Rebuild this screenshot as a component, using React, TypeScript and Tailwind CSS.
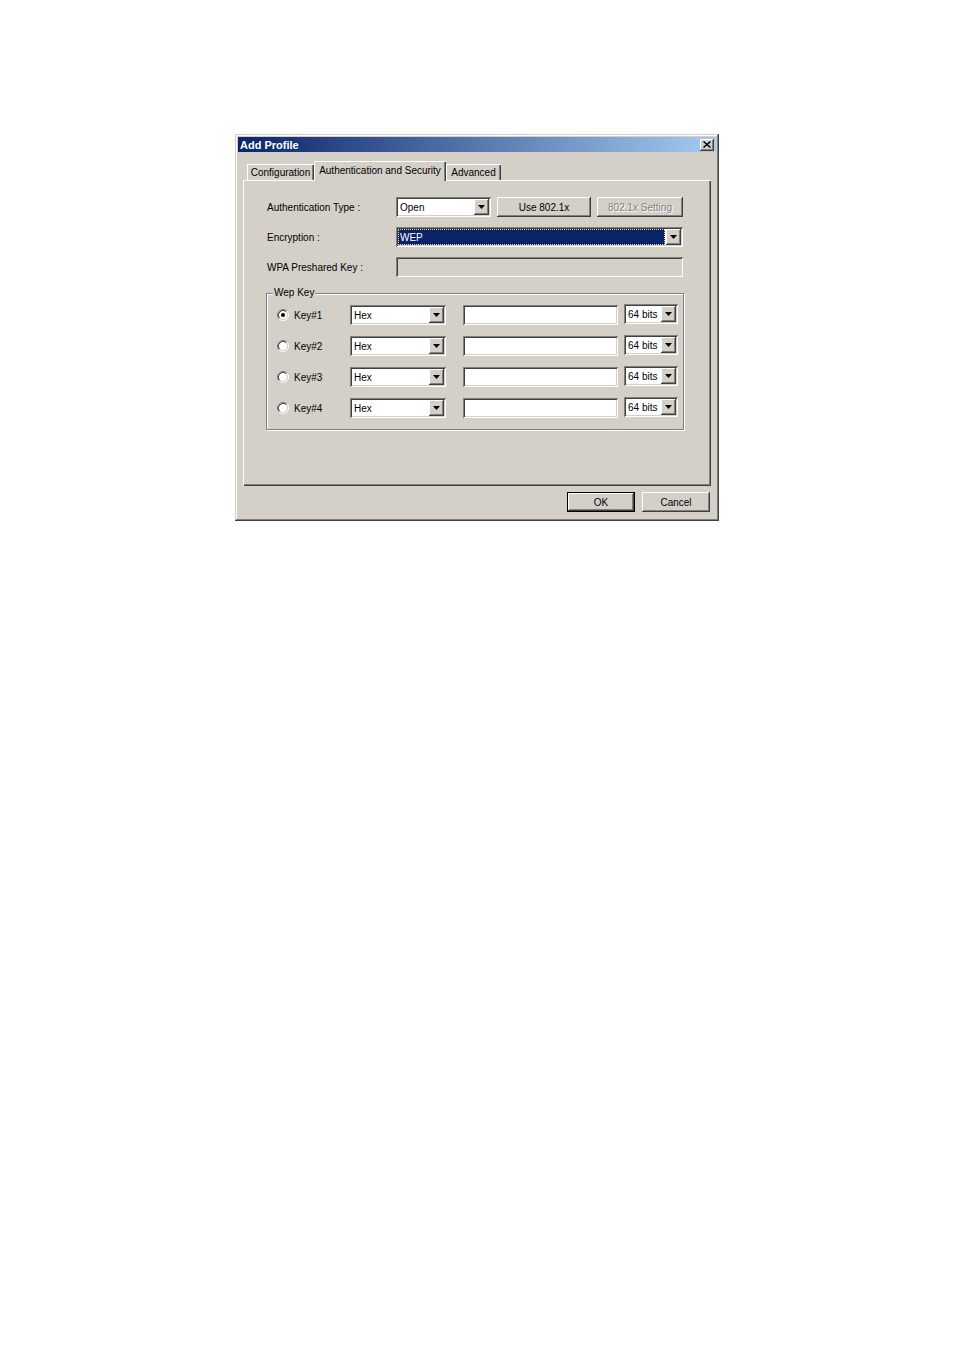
import type { ReactNode } from 'react'

const raised =
  'shadow-[inset_-1px_-1px_0_#404040,inset_1px_1px_0_#ffffff,inset_-2px_-2px_0_#808080,inset_2px_2px_0_#d4d0c8]'
const sunken =
  'shadow-[inset_1px_1px_0_#808080,inset_-1px_-1px_0_#ffffff,inset_2px_2px_0_#404040,inset_-2px_-2px_0_#d4d0c8]'

function Arrow() {
  return (
    <svg width="7" height="4" viewBox="0 0 7 4">
      <polygon points="0,0 7,0 3.5,4" fill="#000000" />
    </svg>
  )
}

function ArrowButton() {
  return (
    <div className={`flex h-full w-[15px] shrink-0 items-center justify-center bg-[#d4d0c8] ${raised}`}>
      <Arrow />
    </div>
  )
}

function Combo({ value, width, selected = false }: { value: string; width: string; selected?: boolean }) {
  return (
    <div className={`flex h-[20px] ${width} bg-white p-[2px] ${sunken}`}>
      {selected ? (
        <div className="mr-[1px] flex flex-1 items-center border border-dotted border-[#e9dc8c] bg-[#0a246a] pl-[1px] pt-[1px] text-white">
          {value}
        </div>
      ) : (
        <div className="flex flex-1 items-center pl-[2px] pt-[1px]">{value}</div>
      )}
      <ArrowButton />
    </div>
  )
}

function Button({
  children,
  width,
  disabled = false,
  isDefault = false,
}: {
  children: ReactNode
  width: string
  disabled?: boolean
  isDefault?: boolean
}) {
  return (
    <button
      type="button"
      className={`flex h-[20px] ${width} items-center justify-center bg-[#d4d0c8] pt-[1px] ${
        isDefault ? 'border border-black' : ''
      } ${raised} ${disabled ? 'text-[#808080] [text-shadow:1px_1px_0_#ffffff]' : 'text-black'}`}
    >
      {children}
    </button>
  )
}

function Radio({ checked }: { checked?: boolean }) {
  return (
    <svg width="12" height="12" viewBox="0 0 12 12" className="shrink-0">
      <circle cx="6" cy="6" r="4.5" fill="#ffffff" />
      <path d="M2.11 9.89 A5.5 5.5 0 0 1 9.89 2.11" fill="none" stroke="#808080" />
      <path d="M9.89 2.11 A5.5 5.5 0 0 1 2.11 9.89" fill="none" stroke="#ffffff" />
      <path d="M2.82 9.18 A4.5 4.5 0 0 1 9.18 2.82" fill="none" stroke="#404040" />
      <path d="M9.18 2.82 A4.5 4.5 0 0 1 2.82 9.18" fill="none" stroke="#d4d0c8" />
      {checked && <circle cx="6" cy="6" r="2" fill="#000000" />}
    </svg>
  )
}

function Tab({ label, width, active = false }: { label: string; width: string; active?: boolean }) {
  return (
    <div
      className={`flex ${width} items-center justify-center bg-[#d4d0c8] shadow-[inset_1px_1px_0_#ffffff,inset_-1px_0_0_#404040,inset_-2px_0_0_#808080] ${
        active ? 'relative z-10 -mb-px h-[20px] pb-[1px]' : 'h-[16px] pt-[1px]'
      }`}
    >
      {label}
    </div>
  )
}

const keys = ['Key#1', 'Key#2', 'Key#3', 'Key#4']

export default function App() {
  return (
    <div className="min-h-[1351px] w-full bg-white pl-[235px] pt-[134px] font-['Liberation_Sans',Arial,sans-serif] text-[10px] leading-[12px] text-black">
      <div className="flex h-[387px] w-[484px] flex-col bg-[#d4d0c8] p-[3px] shadow-[inset_-1px_-1px_0_#404040,inset_1px_1px_0_#d4d0c8,inset_-2px_-2px_0_#808080,inset_2px_2px_0_#ffffff]">
        {/* title bar */}
        <div className="flex h-[15px] items-center justify-between bg-[linear-gradient(to_right,#0a246a,#a6caf0)] pl-[2px]">
          <span className="text-[11px] font-bold text-white">Add Profile</span>
          <div className={`mr-[2px] flex h-[12px] w-[14px] items-center justify-center bg-[#d4d0c8] ${raised}`}>
            <svg width="8" height="7" viewBox="0 0 8 7">
              <path d="M0.5 0.5 L7.5 6.5 M7.5 0.5 L0.5 6.5" stroke="#000000" strokeWidth="1.5" />
            </svg>
          </div>
        </div>

        <div className="flex flex-1 flex-col px-[5px]">
          {/* tabs */}
          <div className="flex h-[28px] items-end pl-[4px]">
            <Tab label="Configuration" width="w-[67px]" />
            <Tab label="Authentication and Security" width="w-[132px]" active />
            <Tab label="Advanced" width="w-[55px]" />
          </div>

          {/* tab body */}
          <div className="flex h-[306px] flex-col pl-[24px] pt-[17px] shadow-[inset_1px_1px_0_#ffffff,inset_-1px_-1px_0_#404040,inset_-2px_-2px_0_#808080]">
            <div className="flex h-[20px] items-center">
              <div className="w-[129px] pt-[2px]">Authentication Type :</div>
              <Combo value="Open" width="w-[95px]" />
              <div className="ml-[6px]">
                <Button width="w-[94px]">Use 802.1x</Button>
              </div>
              <div className="ml-[6px]">
                <Button width="w-[86px]" disabled>
                  802.1x Setting
                </Button>
              </div>
            </div>

            <div className="mt-[10px] flex h-[20px] items-center">
              <div className="w-[129px] pt-[1px]">Encryption :</div>
              <Combo value="WEP" width="w-[287px]" selected />
            </div>

            <div className="mt-[10px] flex h-[20px] items-center">
              <div className="w-[129px] pt-[2px]">WPA Preshared Key :</div>
              <div className={`h-[20px] w-[287px] bg-[#d4d0c8] ${sunken}`} />
            </div>

            <fieldset className="ml-[-1px] mt-[10px] w-[418px] border border-[#808080] pb-[11px] shadow-[1px_1px_0_#ffffff,inset_1px_1px_0_#ffffff]">
              <legend className="ml-[6px] bg-[#d4d0c8] px-[1px]">Wep Key</legend>
              <div className="flex flex-col gap-[11px] pl-[10px] pt-[6px]">
                {keys.map((k, i) => (
                  <div key={k} className="flex h-[20px] items-center">
                    <Radio checked={i === 0} />
                    <div className="ml-[5px] w-[56px] pt-[2px]">{k}</div>
                    <Combo value="Hex" width="w-[96px]" />
                    <div className={`ml-[17px] h-[20px] w-[155px] bg-white ${sunken}`} />
                    <div className="mb-[2px] ml-[6px]">
                      <Combo value="64 bits" width="w-[54px]" />
                    </div>
                  </div>
                ))}
              </div>
            </fieldset>
          </div>

          {/* footer buttons */}
          <div className="mt-[6px] flex justify-end gap-[7px] pr-[1px]">
            <Button width="w-[68px]" isDefault>
              OK
            </Button>
            <Button width="w-[68px]">Cancel</Button>
          </div>
        </div>
      </div>
    </div>
  )
}
